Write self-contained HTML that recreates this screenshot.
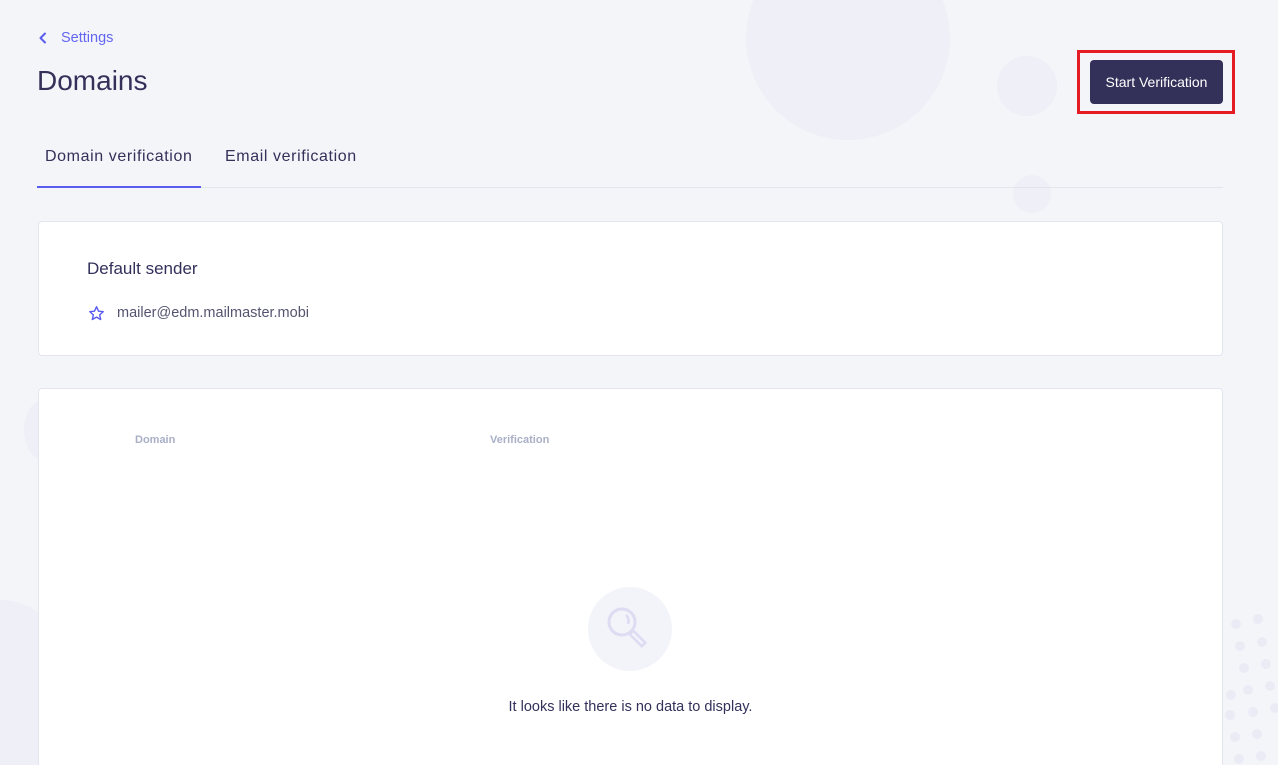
<!DOCTYPE html>
<html style="height:765px;overflow:hidden"><head><meta charset="utf-8"><style>
*{margin:0;padding:0;box-sizing:border-box}
body{width:1278px;height:765px;overflow:hidden;background:#f4f5f9;font-family:"Liberation Sans",sans-serif;position:relative;color:#33305a}
.c{position:absolute;border-radius:50%;background:#eeeff7}
.card{position:absolute;left:38px;width:1185px;background:#fff;border:1px solid #e3e6ee;border-radius:4px}
.dot{position:absolute;width:10px;height:10px;border-radius:50%;background:#ebebf5}
</style></head><body>
<div class="c" style="left:746px;top:-64px;width:204px;height:204px"></div>
<div class="c" style="left:997px;top:56px;width:60px;height:60px"></div>
<div class="c" style="left:1013px;top:175px;width:38px;height:38px"></div>
<div class="c" style="left:-80px;top:600px;width:160px;height:200px"></div>
<div class="c" style="left:24px;top:400px;width:40px;height:60px"></div>
<div class="dot" style="left:1231px;top:619px"></div><div class="dot" style="left:1253px;top:614px"></div>
<div class="dot" style="left:1235px;top:641px"></div><div class="dot" style="left:1257px;top:637px"></div>
<div class="dot" style="left:1239px;top:663px"></div><div class="dot" style="left:1261px;top:659px"></div>
<div class="dot" style="left:1243px;top:685px"></div><div class="dot" style="left:1265px;top:681px"></div>
<div class="dot" style="left:1226px;top:690px"></div><div class="dot" style="left:1225px;top:710px"></div>
<div class="dot" style="left:1248px;top:707px"></div><div class="dot" style="left:1270px;top:703px"></div>
<div class="dot" style="left:1230px;top:732px"></div><div class="dot" style="left:1252px;top:729px"></div>
<div class="dot" style="left:1234px;top:754px"></div><div class="dot" style="left:1256px;top:751px"></div>

<svg style="position:absolute;left:38px;top:32px" width="10" height="12" viewBox="0 0 10 12"><path d="M7 1.5 L2.5 6 L7 10.5" stroke="#5a5cf0" stroke-width="2" fill="none" stroke-linecap="round" stroke-linejoin="round"/></svg>
<div style="position:absolute;left:61px;top:30px;font-size:14.5px;color:#6366f1">Settings</div>
<div style="position:absolute;left:37px;top:65px;font-size:28px;color:#33305a">Domains</div>
<div style="position:absolute;left:1077px;top:50px;width:158px;height:64px;border:3px solid #e51c23"></div>
<div style="position:absolute;left:1090px;top:60px;width:133px;height:44px;background:#33305a;border-radius:4px;color:#fff;font-size:14px;line-height:44px;text-align:center">Start Verification</div>

<div style="position:absolute;left:45px;top:148px;font-size:16px;letter-spacing:0.6px;color:#33305a">Domain verification</div>
<div style="position:absolute;left:225px;top:148px;font-size:16px;letter-spacing:0.6px;color:#33305a">Email verification</div>
<div style="position:absolute;left:37px;top:187px;width:1186px;height:1px;background:#e1e5ec"></div>
<div style="position:absolute;left:37px;top:186px;width:164px;height:2px;background:#5a5cf0"></div>

<div class="card" style="top:221px;height:135px">
<div style="position:absolute;left:48px;top:37px;font-size:17px;color:#33305a">Default sender</div>
<svg style="position:absolute;left:49px;top:83px" width="17" height="17" viewBox="0 0 24 24"><path d="M12 2.5l2.9 6.2 6.6.7-5 4.5 1.4 6.6L12 17.1l-5.9 3.4 1.4-6.6-5-4.5 6.6-.7z" fill="none" stroke="#5a5cf0" stroke-width="2" stroke-linejoin="round"/></svg>
<div style="position:absolute;left:78px;top:83px;font-size:14.5px;color:#555470">mailer@edm.mailmaster.mobi</div>
</div>

<div class="card" style="top:388px;height:380px">
<div style="position:absolute;left:96px;top:45px;font-size:11px;color:#a9b0c6;font-weight:bold">Domain</div>
<div style="position:absolute;left:451px;top:45px;font-size:11px;color:#a9b0c6;font-weight:bold">Verification</div>
<div style="position:absolute;left:549px;top:198px;width:84px;height:84px;border-radius:50%;background:#f3f3fa"></div>
<svg style="position:absolute;left:549px;top:198px" width="84" height="84" viewBox="0 0 84 84"><circle cx="34" cy="35" r="13" fill="none" stroke="#dcdcf2" stroke-width="3"/><path d="M38 28 a8 8 0 0 1 2 9" fill="none" stroke="#dcdcf2" stroke-width="2.5"/><rect x="47" y="43" width="5" height="17" transform="rotate(-45 49.5 51.5)" fill="none" stroke="#dcdcf2" stroke-width="2.5"/></svg>
<div style="position:absolute;left:0;width:100%;top:310px;text-align:center;font-size:14.5px;color:#33305a">It looks like there is no data to display.</div>
</div>
</body></html>
